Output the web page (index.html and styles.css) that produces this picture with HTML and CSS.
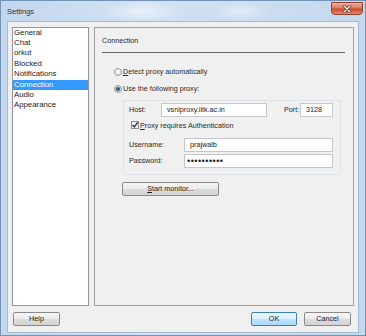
FILE: index.html
```html
<!DOCTYPE html>
<html>
  <head>
    <title>Settings</title>
    <link rel="stylesheet" href="styles.css">
  </head>
  <body>
    <div class="window">
      <div class="titlebar">
        <span class="title">Settings</span>
        <div class="close">
          <svg width="10" height="8" viewBox="0 0 10 8">
            <path d="M2 1 L8 7 M8 1 L2 7" stroke="#5a1a10" stroke-width="2.6" stroke-linecap="round"/>
            <path d="M2 1 L8 7 M8 1 L2 7" stroke="#fff" stroke-width="1.4" stroke-linecap="round"/>
          </svg>
        </div>
      </div>
      <div class="client">
        <div class="main">
          <ul class="nav">
            <li>General</li>
            <li>Chat</li>
            <li>orkut</li>
            <li>Blocked</li>
            <li>Notifications</li>
            <li class="selected">Connection</li>
            <li>Audio</li>
            <li>Appearance</li>
          </ul>
          <div class="panel">
            <div class="panel-head">Connection</div>
            <div class="options">
              <div class="radio-row"><span class="radio"></span><span><u>D</u>etect proxy automatically</span></div>
              <div class="radio-row"><span class="radio on"></span><span>Use the following proxy:</span></div>
              <div class="group">
                <div class="row">
                  <span class="label host">Host:</span>
                  <div class="field host-field">vsnlproxy.iitk.ac.in</div>
                  <span class="label port">Port:</span>
                  <div class="field port-field">3128</div>
                </div>
                <div class="check-row">
                  <span class="check">
                    <svg width="8" height="8" viewBox="0 0 8 8">
                      <path d="M1.5 4 L3.3 6 L6.6 1.5" fill="none" stroke="#333" stroke-width="1.3"/>
                    </svg>
                  </span>
                  <span><u>P</u>roxy requires Authentication</span>
                </div>
                <div class="row user-row">
                  <span class="label wide">Username:</span>
                  <div class="field grow">prajwalb</div>
                </div>
                <div class="row pass-row">
                  <span class="label wide">Password:</span>
                  <div class="field grow dots">&#8226;&#8226;&#8226;&#8226;&#8226;&#8226;&#8226;&#8226;&#8226;&#8226;</div>
                </div>
              </div>
              <button class="btn monitor"><u>S</u>tart monitor...</button>
            </div>
          </div>
        </div>
        <div class="footer">
          <button class="btn help">Help</button>
          <div class="footer-right">
            <button class="btn default">OK</button>
            <button class="btn">Cancel</button>
          </div>
        </div>
      </div>
    </div>
  </body>
</html>
```

FILE: styles.css
```css
body {
  margin: 0;
  font-family: "Liberation Sans", Arial, sans-serif;
}

.window {
  width: 366px;
  height: 336px;
  box-sizing: border-box;
  border: 1px solid #7492b5;
  background: linear-gradient(90deg, #c2d7ee, #d2e2f3 40%, #c4d8ee);
  display: flex;
  flex-direction: column;
}

.titlebar {
  height: 20px;
  display: flex;
  align-items: flex-start;
  justify-content: space-between;
  background: radial-gradient(ellipse 40px 10px at 140px 10px, rgba(255, 255, 255, 0.5), transparent),
    radial-gradient(ellipse 30px 10px at 240px 10px, rgba(255, 255, 255, 0.4), transparent);
}

.title {
  font-size: 7.5px;
  color: #2a3545;
  margin: 6px 0 0 6px;
}

.close {
  width: 32px;
  height: 13px;
  margin: 1px 2px 0 0;
  box-sizing: border-box;
  border: 1px solid #96402f;
  border-radius: 0 0 4px 4px;
  background: linear-gradient(#eeb2a2, #dc7a60 45%, #cb4a2c 55%, #e08a6c);
  display: flex;
  align-items: center;
  justify-content: center;
}

.client {
  margin: 0 6px 2px 6px;
  border: 1px solid #a6bad2;
  background-color: #f0f0f0;
  height: 310px;
  padding: 5px 4px 0 4px;
  display: flex;
  flex-direction: column;
}

.main {
  height: 279px;
  display: flex;
  gap: 5px;
}

.nav {
  list-style: none;
  margin: 0;
  padding: 0;
  width: 77px;
  box-sizing: border-box;
  border: 1px solid #8f959e;
  background-color: white;
  font-size: 7.8px;
  color: #222;
}

.nav li {
  height: 10.4px;
  line-height: 10.4px;
  padding-left: 1px;
}

.nav li.selected {
  background-color: #3399ff;
  color: white;
}

.panel {
  flex: 1;
  border: 1px solid #a0a0a0;
  background-color: #f0f0f0;
  font-size: 7.2px;
  color: #2a2a2a;
}

.panel-head {
  margin: 0 8px 0 7px;
  padding: 8px 0 7px 0;
  line-height: 9px;
  border-bottom: 1px solid #6a6a6a;
}

.options {
  padding: 14px 12px 0 19px;
}

.radio-row {
  height: 10px;
  display: flex;
  align-items: center;
  gap: 1px;
  margin-bottom: 7px;
}

.radio-row + .radio-row {
  margin-bottom: 6px;
}

.radio {
  width: 8px;
  height: 8px;
  box-sizing: border-box;
  border-radius: 50%;
  border: 1px solid #979898;
  background: radial-gradient(circle at 50% 40%, #ffffff, #dcdcdc);
}

.radio.on {
  background: radial-gradient(circle, #2a4f6d 0, #3d6f96 1.6px, #c9d8e6 2.4px, #f4f4f4 4px);
}

.group {
  margin-left: 9px;
  border: 1px solid #dde3e8;
  padding: 2px 7px 6px 5px;
}

.row {
  display: flex;
  align-items: center;
  height: 14px;
}

.label {
  flex: none;
}

.label.host {
  width: 32px;
}

.label.port {
  width: 16px;
  margin-left: 17px;
}

.label.wide {
  width: 55px;
}

.field {
  height: 14px;
  box-sizing: border-box;
  border: 1px solid #c4c8ce;
  background-color: white;
  padding-left: 5px;
  line-height: 12px;
  color: #222;
}

.host-field {
  width: 106px;
}

.port-field {
  width: 33px;
}

.grow {
  flex: 1;
}

.dots {
  font-size: 9px;
  letter-spacing: 0.5px;
  padding-left: 2px;
}

.check-row {
  display: flex;
  align-items: center;
  gap: 1px;
  height: 11px;
  margin: 3px 0 7px 2px;
}

.check {
  width: 8px;
  height: 8px;
  box-sizing: border-box;
  border: 1px solid #8e8f8f;
  background-color: #eef2f6;
  display: flex;
}

.check svg {
  margin: -1px;
}

.pass-row {
  margin-top: 2px;
}

.btn {
  font-family: inherit;
  font-size: 7.2px;
  color: #1a1a1a;
  height: 14px;
  padding: 0;
  box-sizing: border-box;
  border: 1px solid #8a8a8a;
  border-radius: 2px;
  background: linear-gradient(#f6f6f6, #ebebeb 48%, #dcdcdc 52%, #d4d4d4);
}

.monitor {
  width: 97px;
  margin: 7px 0 0 8px;
}

.footer {
  display: flex;
  justify-content: space-between;
  padding-top: 6px;
}

.help {
  width: 47px;
  margin-left: 1px;
}

.footer-right {
  display: flex;
  gap: 7px;
  margin-right: 3px;
}

.footer-right .btn {
  width: 47px;
}

.footer-right .default {
  width: 46px;
  border-color: #3c7fb1;
  background: linear-gradient(#eaf6fd, #d9f0fc 48%, #bee6fd 52%, #a7d9f5);
}
```
